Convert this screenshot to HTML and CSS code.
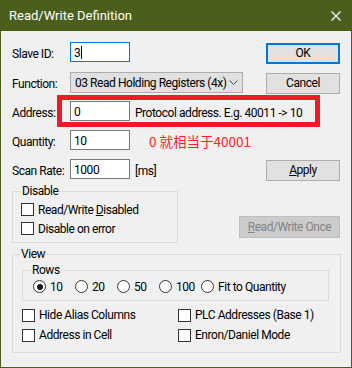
FILE: index.html
```html
<!DOCTYPE html>
<html>
<head>
<meta charset="utf-8">
<link rel="stylesheet" href="styles.css">
</head>
<body>
<div class="window">
  <div class="titlebar">
    <span class="title">Read/Write Definition</span>
    <svg class="close" viewBox="0 0 10 10" width="10" height="10"><path d="M0.5 0.5 L9.5 9.5 M9.5 0.5 L0.5 9.5" stroke="#ffffff" stroke-width="1.1" fill="none"/></svg>
  </div>
  <div class="client">
    <div class="form">
      <div class="lbl">Slave ID:</div>
      <div class="field"><div class="tb focus">3<span class="caret"></span></div></div>
      <div class="btn default">OK</div>

      <div class="lbl">Function:</div>
      <div class="field"><div class="combo"><span>03 Read Holding Registers (4x)</span><svg class="chev" viewBox="0 0 9 5" width="9" height="5"><path d="M0.5 0.5 L4.5 4.5 L8.5 0.5" stroke="#444" stroke-width="1" fill="none"/></svg></div></div>
      <div class="btn">Cancel</div>

      <div class="lbl">Address:</div>
      <div class="field"><div class="tb">0</div><span class="extra">Protocol address. E.g. 40011 -&gt; 10</span><div class="redbox"></div></div>
      <div></div>

      <div class="lbl">Quantity:</div>
      <div class="field"><div class="tb">10</div><span class="note">0 就相当于40001</span></div>
      <div></div>

      <div class="lbl">Scan Rate:</div>
      <div class="field"><div class="tb">1000</div><span class="extra">[ms]</span></div>
      <div class="btn"><u>A</u>pply</div>
    </div>

    <div class="disable-row">
      <fieldset class="group disable">
        <legend>Disable</legend>
        <div class="check"><span class="box"></span><span>Read/Write <u>D</u>isabled</span></div>
        <div class="check"><span class="box"></span><span>Disable on error</span></div>
      </fieldset>
      <div class="btn wide off"><u>R</u>ead/Write Once</div>
    </div>

    <fieldset class="group view">
      <legend>View</legend>
      <fieldset class="group rows">
        <legend>Rows</legend>
        <div class="radios">
          <div class="radio"><span class="dot on"></span><span>10</span></div>
          <div class="radio"><span class="dot"></span><span>20</span></div>
          <div class="radio"><span class="dot"></span><span>50</span></div>
          <div class="radio"><span class="dot"></span><span>100</span></div>
          <div class="radio last"><span class="dot"></span><span>Fit to Quantity</span></div>
        </div>
      </fieldset>
      <div class="checks">
        <div class="check"><span class="box"></span><span>Hide Alias Columns</span></div>
        <div class="check"><span class="box"></span><span>PLC Addresses (Base 1)</span></div>
        <div class="check"><span class="box"></span><span>Address in Cell</span></div>
        <div class="check"><span class="box"></span><span>Enron/Daniel Mode</span></div>
      </div>
    </fieldset>
  </div>
</div>
</body>
</html>
```

FILE: styles.css
```css
* { box-sizing: border-box; }
html, body { margin: 0; padding: 0; }
body {
  width: 352px;
  height: 368px;
  overflow: hidden;
  font-family: Roboto, "Liberation Sans", sans-serif;
  font-size: 12px;
  letter-spacing: -0.45px;
  color: #000;
  background: #4b5e1c;
}
.window {
  width: 352px;
  height: 368px;
  display: flex;
  flex-direction: column;
  background: #4b5e1c;
}
.titlebar {
  height: 31px;
  flex: none;
  display: flex;
  align-items: center;
  padding-left: 9px;
  color: #ffffff;
  font-size: 13px;
  letter-spacing: 0;
}
.title { flex: 1; }
.close { margin-right: 11px; }
.client {
  flex: 1;
  margin: 0 1px 1px 1px;
  background: #f0f0f0;
  padding: 11px 11px 0 11px;
}
.form {
  display: grid;
  grid-template-columns: 58px 196px 74px;
  grid-template-rows: 30px 29px 29px 29px 25px;
}
.lbl {
  padding-top: 2px;
  line-height: 20px;
  height: 22px;
}
.field {
  display: flex;
  align-items: flex-start;
  position: relative;
}
.tb {
  width: 60px;
  height: 20px;
  flex: none;
  border: 1px solid #7a7a7a;
  background: #ffffff;
  padding: 2px 0 0 3px;
  line-height: 16px;
  white-space: nowrap;
}
.tb.focus { border-color: #0078d7; }
.caret {
  display: inline-block;
  width: 1px;
  height: 13px;
  background: #000;
  vertical-align: -2px;
  margin-left: 1px;
}
.extra {
  margin-left: 5px;
  padding-top: 2px;
  line-height: 20px;
  white-space: nowrap;
}
.note {
  margin-left: 19px;
  padding-top: 1px;
  line-height: 20px;
  font-family: "Noto Sans CJK SC", sans-serif;
  font-size: 13.5px;
  letter-spacing: 0;
  color: #ff2222;
  white-space: nowrap;
}
.redbox {
  position: absolute;
  left: -13px;
  top: -6px;
  width: 263px;
  height: 32px;
  border: 5px solid #ed1c24;
}
.combo {
  width: 173px;
  height: 21px;
  border: 1px solid #adadad;
  background: #e1e1e1;
  display: flex;
  align-items: flex-start;
  justify-content: space-between;
  padding: 1px 0 0 4px;
  line-height: 19px;
  white-space: nowrap;
}
.chev { margin: 6px 4px 0 0; }
.btn {
  width: 74px;
  height: 21px;
  margin-top: 1px;
  border: 1px solid #adadad;
  background: #e1e1e1;
  text-align: center;
  line-height: 19px;
  white-space: nowrap;
}
.btn.default {
  border: 2px solid #0078d7;
  line-height: 17px;
}
.btn.wide {
  width: 101px;
  height: 22px;
  line-height: 20px;
  margin: 32px 0 0 auto;
}
.btn.off {
  background: #cccccc;
  border-color: #bfbfbf;
  color: #838383;
}
.disable-row {
  display: flex;
  align-items: flex-start;
}
.group {
  border: 1px solid #dcdcdc;
  margin: 0;
  padding: 2px 8px 4px 8px;
  min-width: 0;
}
.group legend {
  padding: 0 1px;
  line-height: 14px;
  height: 14px;
}
.disable { width: 166px; flex: none; }
.check {
  display: flex;
  align-items: center;
  height: 19px;
  white-space: nowrap;
}
.box {
  width: 13px;
  height: 13px;
  flex: none;
  border: 1px solid #333333;
  background: #ffffff;
  margin-right: 4px;
}
.view {
  width: 329px;
  margin-top: 4px;
  padding: 2px 9px 7px 9px;
}
.view > legend { margin-left: -2px; }
.rows {
  width: 307px;
  padding: 1px 10px 5px 10px;
}
.rows > legend { margin-left: -2px; }
.radios {
  display: flex;
  height: 17px;
  align-items: center;
}
.radio {
  width: 42px;
  flex: none;
  display: flex;
  align-items: center;
  white-space: nowrap;
}
.radio.last { width: auto; }
.dot {
  width: 13px;
  height: 13px;
  flex: none;
  border: 1px solid #333333;
  border-radius: 50%;
  background: #ffffff;
  margin-right: 4px;
  position: relative;
}
.dot.on::after {
  content: "";
  position: absolute;
  left: 2.5px;
  top: 2.5px;
  width: 6px;
  height: 6px;
  border-radius: 50%;
  background: #1a1a1a;
}
.checks {
  display: grid;
  grid-template-columns: 156px 156px;
  grid-auto-rows: 20px;
  margin-top: 4px;
}
.checks .check { height: 20px; }
```
